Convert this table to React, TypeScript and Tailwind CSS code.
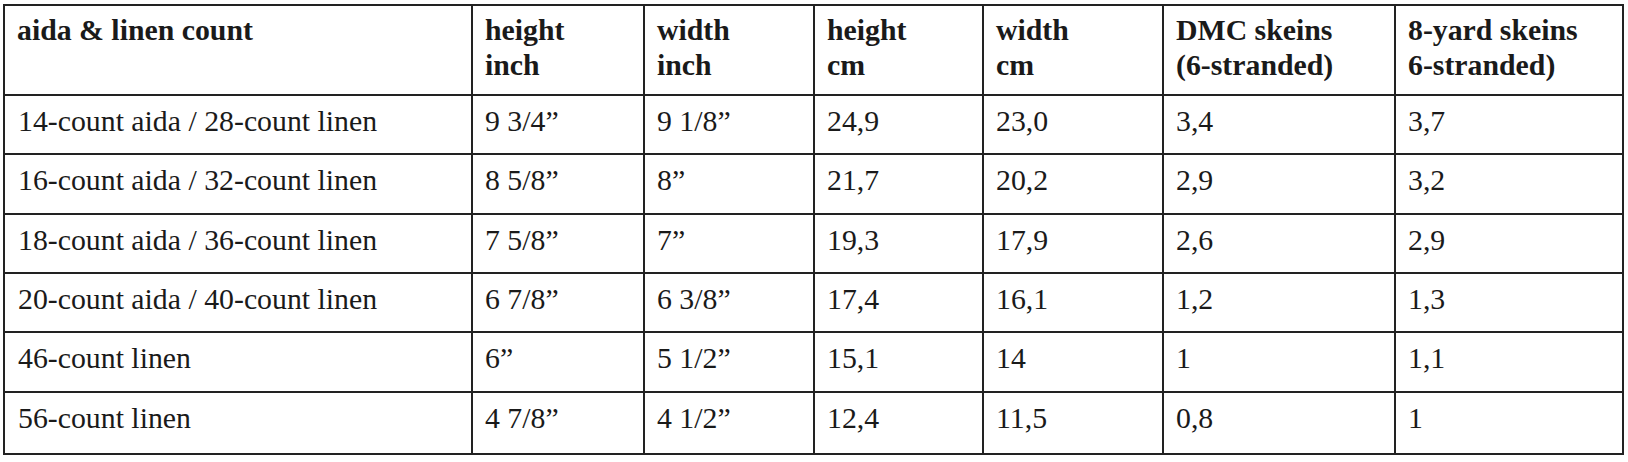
const columns = [
  { label: ["aida & linen count"], width: "w-[468px]" },
  { label: ["height", "inch"], width: "w-[172px]" },
  { label: ["width", "inch"], width: "w-[170px]" },
  { label: ["height", "cm"], width: "w-[169px]" },
  { label: ["width", "cm"], width: "w-[180px]" },
  { label: ["DMC skeins", "(6-stranded)"], width: "w-[232px]" },
  { label: ["8-yard skeins", "6-stranded)"], width: "w-[228px]" },
];

const rows = [
  { h: "h-[59px]", cells: ["14-count aida / 28-count linen", "9 3/4\u201D", "9 1/8\u201D", "24,9", "23,0", "3,4", "3,7"] },
  { h: "h-[60px]", cells: ["16-count aida / 32-count linen", "8 5/8\u201D", "8\u201D", "21,7", "20,2", "2,9", "3,2"] },
  { h: "h-[59px]", cells: ["18-count aida / 36-count linen", "7 5/8\u201D", "7\u201D", "19,3", "17,9", "2,6", "2,9"] },
  { h: "h-[59px]", cells: ["20-count aida / 40-count linen", "6 7/8\u201D", "6 3/8\u201D", "17,4", "16,1", "1,2", "1,3"] },
  { h: "h-[60px]", cells: ["46-count linen", "6\u201D", "5 1/2\u201D", "15,1", "14", "1", "1,1"] },
  { h: "h-[62px]", cells: ["56-count linen", "4 7/8\u201D", "4 1/2\u201D", "12,4", "11,5", "0,8", "1"] },
];

export default function App() {
  return (
    <div className="min-h-[462px] w-[1628px] bg-white pt-[4px] pl-[3px]">
      <table className="w-[1621px] table-fixed border-separate border-spacing-0 border-t-2 border-l-2 border-[#222] font-['Liberation_Serif','Times_New_Roman',serif] text-[29.8px] leading-[35px] text-[#1a1a1a]">
        <thead>
          <tr>
            {columns.map((col, i) => (
              <th
                key={i}
                className={`${col.width} h-[90px] border-r-2 border-b-2 border-[#222] pt-[6px] pl-[12px] text-left align-top font-bold`}
              >
                {col.label.map((line, j) => (
                  <div key={j}>{line}</div>
                ))}
              </th>
            ))}
          </tr>
        </thead>
        <tbody>
          {rows.map((row, i) => (
            <tr key={i}>
              {row.cells.map((cell, j) => (
                <td
                  key={j}
                  className={`${row.h} border-r-2 border-b-2 border-[#222] pt-[7px] ${j === 0 ? "pl-[13px]" : "pl-[12px]"} align-top`}
                >
                  {cell}
                </td>
              ))}
            </tr>
          ))}
        </tbody>
      </table>
    </div>
  );
}
